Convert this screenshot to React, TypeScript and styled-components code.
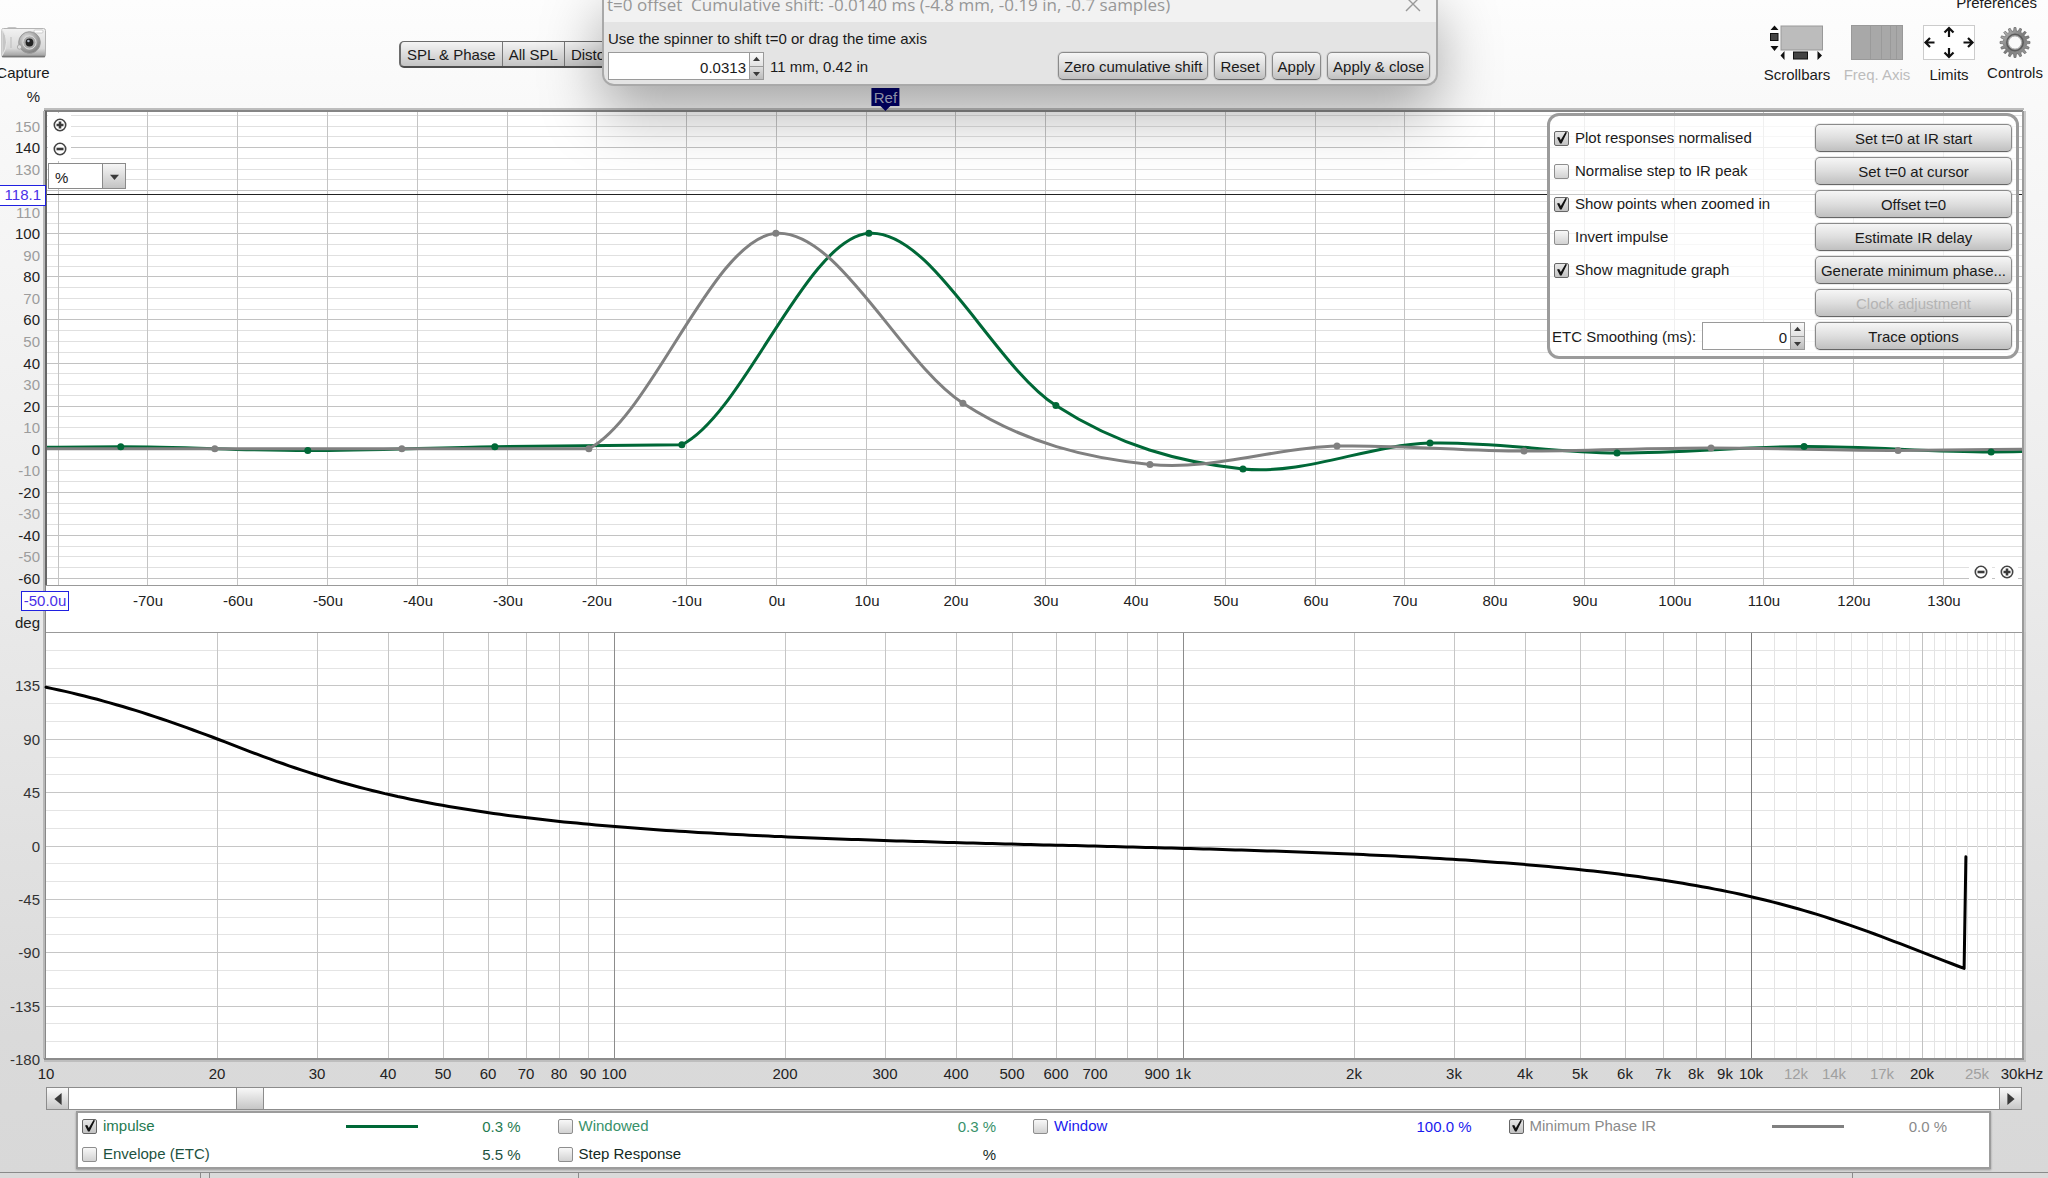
import React, { useId, useLayoutEffect, useRef, useState } from "react";
import styled, { createGlobalStyle, css } from "styled-components";

const FONT = `"Liberation Sans", Arial, sans-serif`;

const GlobalStyle = createGlobalStyle`
  *, *::before, *::after { box-sizing: border-box; }
  body { margin: 0; font-family: ${FONT}; font-size: 15px; color: #1a1a1a; }
  button, input, select { font: inherit; color: inherit; margin: 0; }
`;

const Page = styled.main`
  position: relative;
  display: flex;
  flex-direction: column;
  height: 100vh;
  min-height: 800px;
  overflow: hidden;
  background: linear-gradient(#fdfdfd 0, #f8f8f8 130px, #ececec 45%, #dadada 88%, #d8d8d8 100%);
`;

/* ---------- header ---------- */

const Header = styled.header`
  display: flex;
  flex-direction: column;
  height: 84px;
  flex: none;
`;

const MenuRow = styled.nav`
  display: flex;
  justify-content: flex-end;
  margin-top: -6px;
  padding-right: 11px;
`;

const MenuButton = styled.button`
  border: 0;
  padding: 0;
  background: none;
  line-height: 18px;
`;

const ToolRow = styled.div`
  display: flex;
  align-items: flex-start;
  padding-right: 5px;
`;

const ToolButton = styled.button<{ $width: number }>`
  display: flex;
  flex-direction: column;
  align-items: center;
  gap: 6px;
  flex: none;
  width: ${(p) => p.$width}px;
  margin-top: 13px;
  padding: 0;
  border: 0;
  background: none;
  line-height: 18px;
  white-space: nowrap;
  &:disabled { color: #bdbdbd; }
`;

const CaptureButton = styled(ToolButton)`
  margin-left: -3px;
`;

const Tools = styled.div`
  display: flex;
  gap: 12px;
  margin-left: auto;
`;

const Tabs = styled.nav`
  display: flex;
  height: 27px;
  margin: 29px 0 0 350px;
  border: 1px solid #6c6c6c;
  border-bottom: 2px solid #4c4c4c;
  border-left-width: 2px;
  border-radius: 5px;
  background: linear-gradient(#f4f4f4, #c4c4c4);
`;

const Tab = styled.button`
  padding: 0 6px;
  border: 0;
  border-right: 1px solid #777;
  background: none;
  white-space: nowrap;
`;

/* ---------- common controls ---------- */

const PushButton = styled.button<{ $tight?: boolean }>`
  height: 28px;
  padding: 0 ${(p) => (p.$tight ? 5 : 0)}px;
  border: 1px solid #8a8a8a;
  border-bottom-color: #666;
  border-radius: 5px;
  background: linear-gradient(#f6f6f6, #dedede 50%, #c0c0c0);
  box-shadow: 0 0 0 1px rgba(0, 0, 0, 0.08);
  white-space: nowrap;
  &:disabled { color: #b4b4b4; }
`;

const SpinnerBox = styled.span<{ $width: number }>`
  display: flex;
  width: ${(p) => p.$width}px;
  height: 28px;
  border: 1px solid #9a9a9a;
  background: #fff;
`;

const SpinnerInput = styled.input`
  flex: 1;
  min-width: 0;
  padding: 2px 3px 0 0;
  border: 0;
  background: none;
  text-align: right;
`;

const SpinnerArrows = styled.span`
  display: grid;
  grid-template-rows: 1fr 1fr;
  width: 14px;
  border-left: 1px solid #9a9a9a;
`;

const ArrowButton = styled.button`
  display: grid;
  place-items: center;
  padding: 0;
  border: 0;
  background: linear-gradient(#fafafa, #e2e2e2);
  & + & {
    border-top: 1px solid #9a9a9a;
    background: linear-gradient(#dedede, #bcbcbc);
  }
`;

function Triangle({ dir, size = 7 }: { dir: "up" | "down" | "left" | "right"; size?: number }) {
  const d = {
    up: "M0 7 L5 1 L10 7Z",
    down: "M0 3 L5 9 L10 3Z",
    left: "M8 0 L2 5 L8 10Z",
    right: "M2 0 L8 5 L2 10Z",
  }[dir];
  return (
    <svg width={size} height={size} viewBox="0 0 10 10" aria-hidden="true">
      <path d={d} fill="#3a3a3a" />
    </svg>
  );
}

function Spinner({ id, label, value, width }: { id: string; label?: string; value: string; width: number }) {
  return (
    <SpinnerBox $width={width}>
      <SpinnerInput id={id} aria-label={label} defaultValue={value} />
      <SpinnerArrows>
        <ArrowButton aria-label="Increase"><Triangle dir="up" /></ArrowButton>
        <ArrowButton aria-label="Decrease"><Triangle dir="down" /></ArrowButton>
      </SpinnerArrows>
    </SpinnerBox>
  );
}

const CheckLabel = styled.label<{ $color?: string }>`
  display: flex;
  align-items: center;
  gap: 6px;
  color: ${(p) => p.$color ?? "#1a1a1a"};
  white-space: nowrap;
  line-height: 18px;
`;

const TickBox = styled.span`
  display: grid;
  width: 15px;
  height: 15px;
  & > * { grid-area: 1 / 1; }
  svg { visibility: hidden; pointer-events: none; overflow: visible; }
  input:checked + svg { visibility: visible; }
`;

const TickInput = styled.input`
  appearance: none;
  width: 15px;
  height: 15px;
  border: 1px solid #8e8e8e;
  border-radius: 2px;
  background: linear-gradient(#f8f8f8, #d2d2d2);
  &:checked { border-color: #666; background: linear-gradient(#e8e8e8, #c2c2c2); }
`;

function Check({ text, checked, color }: { text: string; checked?: boolean; color?: string }) {
  return (
    <CheckLabel $color={color}>
      <TickBox>
        <TickInput type="checkbox" defaultChecked={checked} />
        <svg width="15" height="15" viewBox="0 0 15 15" aria-hidden="true">
          <path d="M3 6.5 L5.2 6 L6.8 9 L11.5 1 L13 1.4 L7.6 12.6 L6 12.6Z" fill="#111" />
        </svg>
      </TickBox>
      {text}
    </CheckLabel>
  );
}

/* ---------- offset dialog ---------- */

const Dialog = styled.section`
  position: absolute;
  top: -14px;
  left: 602px;
  z-index: 3;
  width: 836px;
  border: 2px solid #a9a9a9;
  border-top: 0;
  border-radius: 12px;
  background: #e4e4e4;
  box-shadow: 0 26px 60px rgba(0, 0, 0, 0.34);
`;

const DialogTitle = styled.header`
  display: flex;
  align-items: center;
  justify-content: space-between;
  height: 36px;
  padding: 0 15px 0 3px;
  border-radius: 12px 12px 0 0;
  background: #f2f2f2;
  color: #979797;
  font-family: "Open Sans", "Noto Sans", sans-serif;
  font-size: 17px;
  white-space: pre;
`;

const CloseButton = styled.button`
  display: flex;
  padding: 0;
  border: 0;
  background: none;
`;

const DialogBody = styled.div`
  display: flex;
  flex-direction: column;
  gap: 3px;
  padding: 7px 6px 4px 4px;
`;

const DialogHint = styled.label`
  line-height: 20px;
`;

const DialogRow = styled.div`
  display: flex;
  align-items: center;
  gap: 6px;
`;

const Distance = styled.span`
  flex: 1;
`;

/* ---------- charts ---------- */

const ChartArea = styled.section<{ $share: number }>`
  position: relative;
  flex: ${(p) => p.$share} 1 0;
  min-height: 0;
`;

const ChartSvg = styled.svg`
  display: block;
  overflow: visible;
  font-family: ${FONT};
  font-size: 15px;
`;

const PlotTools = styled.div`
  position: absolute;
  top: 29px;
  left: 48px;
  display: flex;
  flex-direction: column;
  align-items: flex-start;
`;

const AxisTools = styled.div`
  position: absolute;
  right: 30px;
  bottom: 48px;
  display: flex;
  gap: 3px;
`;

const ZoomButton = styled.button`
  display: grid;
  place-items: center;
  width: 23px;
  height: 24px;
  padding: 0;
  border: 0;
  background: #fff;
`;

const UnitPicker = styled.span`
  position: relative;
  display: flex;
  width: 78px;
  height: 26px;
  margin-top: 2px;
  border: 1px solid #8a8a8a;
  background: #fff;
`;

const UnitSelect = styled.select`
  appearance: none;
  width: 100%;
  padding: 2px 0 0 6px;
  border: 0;
  background: none;
`;

const UnitArrow = styled.span`
  position: absolute;
  inset: 0 0 0 auto;
  display: grid;
  place-items: center;
  width: 23px;
  border-left: 1px solid #8a8a8a;
  background: linear-gradient(#f6f6f6, #c4c4c4);
  pointer-events: none;
`;

const ControlPanel = styled.aside`
  position: absolute;
  top: 29px;
  right: 29px;
  display: grid;
  grid-template-columns: 253px 197px;
  column-gap: 10px;
  padding: 8px 4px 6px 2px;
  border: 3px solid #9b9b9b;
  border-radius: 12px;
  background: rgba(255, 255, 255, 0.75);
`;

const PanelColumn = styled.div`
  display: grid;
  grid-auto-rows: 28px;
  gap: 5px;
  & > ${CheckLabel} { padding-left: 2px; }
`;

const SmoothingRow = styled.div`
  display: flex;
  align-items: center;
  justify-content: space-between;
  grid-row: 7;
`;

function useSize<T extends HTMLElement>() {
  const ref = useRef<T>(null);
  const [size, setSize] = useState({ w: 0, h: 0 });
  useLayoutEffect(() => {
    const el = ref.current;
    if (!el) return;
    const read = () => setSize({ w: el.clientWidth, h: el.clientHeight });
    read();
    const ro = new ResizeObserver(read);
    ro.observe(el);
    return () => ro.disconnect();
  }, []);
  return [ref, size] as const;
}

const LEFT = 46;
const RIGHT_GAP = 26;
const range = (from: number, to: number, step: number) => {
  const out: number[] = [];
  for (let v = from; v <= to; v += step) out.push(v);
  return out;
};

// A sample carries its time in microseconds, level in percent, slope in percent per microsecond.
// "slopeIn" applies where the trace has a corner.
type Sample = { t: number; v: number; slope: number; slopeIn?: number };
const STEP = 20.833;
const trace = (offset: number, first: number, values: [number, number, number?][]): Sample[] =>
  values.map(([v, slope, slopeIn], i) => ({ t: offset + (first + i) * STEP, v, slope, slopeIn }));

const impulse = trace(10.36, -5, [
  [0, 0.03], [0.9, 0], [-0.9, 0], [0.9, 0.06], [1.8, 2.1, 0.02], [100, 0.3], [20, -2.7],
  [-9.4, -0.42], [2.6, 0.12], [-2, -0.02], [1, 0.02], [-1.5, 0], [0.2, 0],
]);
const minimumPhase = trace(0, -4, [
  [0, 0], [0, 0], [0, 0], [0, 2.1, 0], [100, 0.3], [21.1, -2.7],
  [-7.3, -0.42], [1.2, 0.1], [-1.1, 0], [0.3, 0], [-0.8, 0], [0, 0],
]);

const timeLabels = range(-70, 130, 10);

function ImpulseChart() {
  const [ref, { w, h }] = useSize<HTMLElement>();
  const clip = useId();
  const top = 27;
  const bottom = h - 47;
  const right = w - RIGHT_GAP;
  const x = (t: number) => LEFT + ((t + 81.3) / 220.1) * (right - LEFT);
  const y = (v: number) => top + ((156.8 - v) / 220.1) * (bottom - top);
  const px = Math.round;

  const curve = (s: Sample[]) =>
    s.map((p, i) => {
      if (i === 0) return `M${x(p.t)} ${y(p.v)}`;
      const q = s[i - 1];
      const d = (p.t - q.t) / 3;
      const slopeIn = p.slopeIn ?? p.slope;
      return `C${x(q.t + d)} ${y(q.v + q.slope * d)} ${x(p.t - d)} ${y(p.v - slopeIn * d)} ${x(p.t)} ${y(p.v)}`;
    }).join(" ");

  return (
    <ChartArea $share={548} ref={ref} aria-label="Impulse response">
      {w > 0 && (
        <ChartSvg width={w} height={h}>
          <clipPath id={clip}><rect x={LEFT} y={top} width={right - LEFT} height={bottom - top} /></clipPath>
          <rect x={LEFT} y={top} width={right - LEFT} height={h - top} fill="#fff" />
          <g shapeRendering="crispEdges">
            {range(-60, 155, 5).map((v) => (
              <rect key={v} x={LEFT} y={px(y(v))} width={right - LEFT} height={1} fill={v % 20 === 0 ? "#c2c2c2" : "#e0e0e0"} />
            ))}
            {range(-80, 130, 10).map((t) => (
              <rect key={t} x={px(x(t))} y={top} width={1} height={bottom - top} fill="#c4c4c4" />
            ))}
            <rect x={LEFT} y={px(y(118.1))} width={right - LEFT} height={1} fill="#222" />
            <rect x={LEFT} y={bottom} width={right - LEFT} height={1} fill="#999" />
          </g>
          <g clipPath={`url(#${clip})`} fill="none" strokeWidth={3}>
            <path d={curve(impulse)} stroke="#006837" />
            <path d={curve(minimumPhase)} stroke="#808080" />
            {impulse.map((p) => <circle key={p.t} cx={x(p.t)} cy={y(p.v)} r={3.5} fill="#006837" />)}
            {minimumPhase.map((p) => <circle key={p.t} cx={x(p.t)} cy={y(p.v)} r={3.5} fill="#808080" />)}
          </g>
          <g shapeRendering="crispEdges">
            <rect x={LEFT - 2} y={top - 3} width={right - LEFT + 4} height={2} fill="#bdbdbd" />
            <rect x={LEFT - 2} y={top - 1} width={right - LEFT + 3} height={2} fill="#858585" />
            <rect x={LEFT - 3} y={top} width={2} height={h - top} fill="#b8b8b8" />
            <rect x={LEFT - 1} y={top} width={2} height={bottom - top} fill="#666" />
            <rect x={LEFT - 1} y={bottom} width={1} height={47} fill="#888" />
            <rect x={right} y={top} width={2} height={h - top} fill="#9a9a9a" />
            <rect x={right + 2} y={top} width={2} height={h - top} fill="#c8c8c8" />
          </g>
          <text x={40} y={18} textAnchor="end" fill="#222">%</text>
          <g textAnchor="end">
            {range(-60, 150, 10).filter((v) => v !== 120).map((v) => (
              <text key={v} x={40} y={px(y(v)) + 6} fill={v % 20 === 0 ? "#222" : "#9c9c9c"}>{v}</text>
            ))}
          </g>
          <g textAnchor="middle" fill="#222">
            {timeLabels.map((t) => <text key={t} x={px(x(t)) + 1} y={bottom + 21}>{t}u</text>)}
          </g>
          <text x={40} y={h - 4} textAnchor="end" fill="#222">deg</text>
          <g fill="#fff" stroke="#2020e0" shapeRendering="crispEdges">
            <rect x={-1} y={px(y(118.1)) - 9} width={46} height={20} />
            <rect x={21} y={bottom + 6} width={47} height={19} />
          </g>
          <g fill="#4a30e8">
            <text x={41} y={px(y(118.1)) + 6} textAnchor="end">118.1</text>
            <text x={45} y={bottom + 21} textAnchor="middle">-50.0u</text>
          </g>
          <path d={`M${x(12.2) - 14} 4 h28 v18 h-9 l-5 5 l-5 -5 h-9Z`} fill="#00006e" />
          <text x={x(12.2)} y={19} textAnchor="middle" fill="#b8bcd8">Ref</text>
        </ChartSvg>
      )}
      <PlotTools>
        <ZoomButton aria-label="Zoom in vertically"><ZoomIcon plus /></ZoomButton>
        <ZoomButton aria-label="Zoom out vertically"><ZoomIcon /></ZoomButton>
        <UnitPicker>
          <UnitSelect aria-label="Vertical axis unit" defaultValue="%">
            <option>%</option>
          </UnitSelect>
          <UnitArrow><Triangle dir="down" size={9} /></UnitArrow>
        </UnitPicker>
      </PlotTools>
      <AxisTools>
        <ZoomButton aria-label="Zoom out horizontally"><ZoomIcon /></ZoomButton>
        <ZoomButton aria-label="Zoom in horizontally"><ZoomIcon plus /></ZoomButton>
      </AxisTools>
      <ControlPanel aria-label="Graph controls">
        <PanelColumn>
          <Check text="Plot responses normalised" checked />
          <Check text="Normalise step to IR peak" />
          <Check text="Show points when zoomed in" checked />
          <Check text="Invert impulse" />
          <Check text="Show magnitude graph" checked />
          <SmoothingRow>
            <label htmlFor="etc-smoothing">ETC Smoothing (ms):</label>
            <Spinner id="etc-smoothing" value="0" width={103} />
          </SmoothingRow>
        </PanelColumn>
        <PanelColumn>
          <PushButton>Set t=0 at IR start</PushButton>
          <PushButton>Set t=0 at cursor</PushButton>
          <PushButton>Offset t=0</PushButton>
          <PushButton>Estimate IR delay</PushButton>
          <PushButton>Generate minimum phase...</PushButton>
          <PushButton disabled>Clock adjustment</PushButton>
          <PushButton>Trace options</PushButton>
        </PanelColumn>
      </ControlPanel>
    </ChartArea>
  );
}

// Second-order high pass at 20 Hz followed by a second-order low pass at 20 kHz.
const phaseAt = (f: number) => {
  const lag = (r: number) => (Math.atan2(Math.SQRT2 * r, 1 - r * r) * 180) / Math.PI;
  const lowEnd = f < 20 ? 3.2 * Math.pow((20 - f) / 10, 1.3) : 0;
  return 180 - lag(f / 20) - lag(f / 20000) - lowEnd;
};
const LAST_FREQUENCY = 23730;

const frequencyLabels: [number, string][] = [
  [10, "10"], [20, "20"], [30, "30"], [40, "40"], [50, "50"], [60, "60"], [70, "70"], [80, "80"], [90, "90"],
  [100, "100"], [200, "200"], [300, "300"], [400, "400"], [500, "500"], [600, "600"], [700, "700"], [900, "900"],
  [1000, "1k"], [2000, "2k"], [3000, "3k"], [4000, "4k"], [5000, "5k"], [6000, "6k"], [7000, "7k"], [8000, "8k"],
  [9000, "9k"], [10000, "10k"], [12000, "12k"], [14000, "14k"], [17000, "17k"], [20000, "20k"], [25000, "25k"],
  [30000, "30kHz"],
];
const faintLabels = [12000, 14000, 17000, 25000];

const frequencyLines: [number, string][] = [
  ...[10, 100, 1000].flatMap((d) => range(2, 9, 1).map((n): [number, string] => [n * d, "#c6c6c6"])),
  ...range(11, 29, 1).map((n): [number, string] => [n * 1000, n === 20 ? "#c2c2c2" : "#e4e4e4"]),
  [100, "#8c8c8c"], [1000, "#8c8c8c"], [10000, "#7c7c7c"],
];

function PhaseChart() {
  const [ref, { w, h }] = useSize<HTMLElement>();
  const top = 0;
  const bottom = h - 28;
  const right = w - RIGHT_GAP;
  const x = (f: number) => LEFT + (Math.log10(f / 10) / Math.log10(3000)) * (right - LEFT);
  const y = (deg: number) => top + ((180 - deg) / 360) * (bottom - top);
  const px = Math.round;

  const curve = range(0, 300, 1)
    .map((i) => 10 * Math.pow(LAST_FREQUENCY / 10, i / 300))
    .map((f, i) => `${i ? "L" : "M"}${x(f).toFixed(1)} ${y(phaseAt(f)).toFixed(1)}`)
    .join(" ") + ` L${x(23900)} ${y(-9.5)}`;

  return (
    <ChartArea $share={455} ref={ref} aria-label="Phase">
      {w > 0 && (
        <ChartSvg width={w} height={h}>
          <rect x={LEFT} y={top} width={right - LEFT} height={bottom - top} fill="#fff" />
          <g shapeRendering="crispEdges">
            {range(-165, 165, 15).map((v) => (
              <rect key={v} x={LEFT} y={px(y(v))} width={right - LEFT} height={1} fill={v % 45 === 0 ? "#c6c6c6" : "#e4e4e4"} />
            ))}
            {frequencyLines.map(([f, c]) => (
              <rect key={f} x={px(x(f))} y={top} width={1} height={bottom - top} fill={c} />
            ))}
            <rect x={LEFT} y={top} width={right - LEFT} height={1} fill="#999" />
            <rect x={LEFT - 3} y={top} width={2} height={bottom - top} fill="#b8b8b8" />
            <rect x={LEFT - 1} y={top} width={1} height={bottom - top} fill="#888" />
            <rect x={right} y={top} width={2} height={bottom - top} fill="#9a9a9a" />
            <rect x={right + 2} y={top} width={2} height={bottom - top + 3} fill="#c4c4c4" />
            <rect x={LEFT - 2} y={bottom - 1} width={right - LEFT + 4} height={2} fill="#8c8c8c" />
            <rect x={LEFT - 2} y={bottom + 1} width={right - LEFT + 6} height={2} fill="#bebebe" />
          </g>
          <path d={curve} fill="none" stroke="#000" strokeWidth={3} strokeLinecap="round" strokeLinejoin="round" />
          <g textAnchor="end" fill="#333">
            {[135, 90, 45, 0, -45, -90, -135, -180].map((v) => (
              <text key={v} x={40} y={px(y(v)) + 6}>{v}</text>
            ))}
          </g>
          <g textAnchor="middle">
            {frequencyLabels.map(([f, label]) => (
              <text key={f} x={px(x(f))} y={bottom + 20} fill={faintLabels.includes(f) ? "#a0a0a0" : "#222"}>
                {label}
              </text>
            ))}
          </g>
        </ChartSvg>
      )}
    </ChartArea>
  );
}

/* ---------- scroll bar, legend, status ---------- */

const ScrollBar = styled.div`
  display: flex;
  flex: none;
  height: 23px;
  margin: 0 26px 1px 46px;
  border: 1px solid #8c8c8c;
  background: #fff;
`;

const ScrollButton = styled.button<{ $end?: boolean }>`
  display: grid;
  place-items: center;
  flex: none;
  width: 22px;
  padding: 0;
  border: 0 solid #8c8c8c;
  border-width: ${(p) => (p.$end ? "0 0 0 1px" : "0 1px 0 0")};
  background: linear-gradient(#fafafa, #c8c8c8);
`;

const thumb = css`
  appearance: none;
  width: 28px;
  height: 21px;
  border: 0 solid #8c8c8c;
  border-width: 0 1px;
  border-radius: 0;
  background: linear-gradient(#f8f8f8, #c6c6c6);
`;

const ScrollTrack = styled.input`
  appearance: none;
  flex: 1;
  min-width: 0;
  height: 21px;
  background: none;
  &::-webkit-slider-thumb { ${thumb} }
  &::-moz-range-thumb { ${thumb} }
`;

const Legend = styled.section`
  display: grid;
  grid-template-columns: repeat(4, 1fr);
  grid-auto-rows: 26px;
  row-gap: 2px;
  flex: none;
  height: 58px;
  margin: 0 57px 3px 76px;
  padding: 0 5px 0 4px;
  border: 2px solid #9c9c9c;
  background: #fff;
  box-shadow: 0 1px 2px rgba(0, 0, 0, 0.3);
`;

const LegendItem = styled.div<{ $color: string }>`
  display: flex;
  align-items: center;
  padding-right: 37px;
  color: ${(p) => p.$color};
  & > ${CheckLabel} { flex: 1; }
`;

const TraceLine = styled.svg`
  width: 72px;
  height: 3px;
  flex: none;
`;

const LegendValue = styled.output`
  width: 103px;
  flex: none;
  text-align: right;
`;

const legend = [
  { name: "impulse", value: "0.3 %", color: "#1f7a50", line: "#006837", on: true },
  { name: "Windowed", value: "0.3 %", color: "#38916a" },
  { name: "Window", value: "100.0 %", color: "#1a1aee" },
  { name: "Minimum Phase IR", value: "0.0 %", color: "#8a8a8a", line: "#808080", on: true },
  { name: "Envelope (ETC)", value: "5.5 %", color: "#1d5240" },
  { name: "Step Response", value: "%", color: "#142a24" },
];

const StatusBar = styled.footer`
  display: grid;
  grid-template-columns: 201px 9px 369px 1fr 195px;
  flex: none;
  height: 6px;
  border-top: 1px solid #8a8a8a;
  background: #dadada;
`;

const StatusCell = styled.span`
  border-right: 1px solid #8a8a8a;
  &:last-child { border-right: 0; }
`;

/* ---------- icons ---------- */

function ZoomIcon({ plus }: { plus?: boolean }) {
  return (
    <svg width="14" height="14" viewBox="0 0 14 14" aria-hidden="true">
      <circle cx="7" cy="7" r="5.7" fill="#fff" stroke="#444" strokeWidth="1.6" />
      <path d={plus ? "M3.5 7 H10.5 M7 3.5 V10.5" : "M3.5 7 H10.5"} stroke="#3a3a3a" strokeWidth="2.6" />
    </svg>
  );
}

function CameraIcon() {
  return (
    <svg width="46" height="33" viewBox="0 0 46 33" aria-hidden="true">
      <defs>
        <linearGradient id="camBody" x1="0" y1="0" x2="0" y2="1">
          <stop offset="0" stopColor="#f2f2f2" /><stop offset="0.7" stopColor="#d8d8d8" /><stop offset="1" stopColor="#9a9a9a" />
        </linearGradient>
        <radialGradient id="camLens" cx="0.4" cy="0.35" r="0.7">
          <stop offset="0" stopColor="#eee" /><stop offset="1" stopColor="#777" />
        </radialGradient>
      </defs>
      <path d="M7 3 q1 -1.5 3 -1 l5 0 q2 0 2 2 h-10Z" fill="#c4c4c4" />
      <rect x="1.5" y="3.5" width="44" height="28.5" rx="2" fill="url(#camBody)" stroke="#b4b4b4" />
      <path d="M2 4 Q11 17 2 31Z" fill="#c6c6c6" stroke="#eee" strokeWidth="0.8" />
      <path d="M2 31.5 H45" stroke="#777" strokeWidth="1.6" />
      <rect x="34" y="5" width="9" height="3" rx="1" fill="#fff" stroke="#bbb" strokeWidth="0.7" />
      <path d="M11 12 V23" stroke="#bbb" />
      <circle cx="29.5" cy="17.5" r="10.8" fill="url(#camLens)" stroke="#999" />
      <circle cx="29.5" cy="17.5" r="6.6" fill="#aaa" stroke="#ddd" />
      <circle cx="29.5" cy="17.5" r="3.9" fill="#222" />
      <circle cx="28.4" cy="16" r="1.3" fill="#aeb6c4" />
      <circle cx="19.5" cy="22" r="2.2" fill="#ddd" stroke="#999" strokeWidth="0.7" />
    </svg>
  );
}

function ScrollbarsIcon() {
  return (
    <svg width="54" height="35" viewBox="0 0 54 35" aria-hidden="true">
      <rect x="11" y="1" width="41.5" height="24" fill="#bcbcbc" stroke="#999" />
      <path d="M0.5 5 L4.5 0.5 L8.5 5Z M0.5 21 L4.5 26 L8.5 21Z M14.5 26 L10.5 30.5 L14.5 35Z M47.5 26 L52 30.5 L47.5 35Z" fill="#111" />
      <rect x="0.5" y="8.5" width="7.5" height="7" fill="#444" stroke="#111" />
      <rect x="23.5" y="27" width="14" height="7" fill="#444" stroke="#111" />
    </svg>
  );
}

function FrequencyIcon() {
  return (
    <svg width="52" height="35" viewBox="0 0 52 35" aria-hidden="true">
      <rect x="0.5" y="0.5" width="51" height="34" fill="#a8a8a8" stroke="#999" />
      <path d="M19.5 1 V34 M30.5 1 V34 M39.5 1 V34 M45.5 1 V34" stroke="#9a9a9a" />
    </svg>
  );
}

function LimitsIcon() {
  return (
    <svg width="52" height="35" viewBox="0 0 52 35" aria-hidden="true">
      <rect x="0.5" y="0.5" width="51" height="34" fill="#fff" stroke="#ccc" />
      <path
        d="M26 3 V12 M21.5 7.5 L26 3 L30.5 7.5 M26 32 V23 M21.5 27.5 L26 32 L30.5 27.5 M2.5 17.5 H11.5 M7 13 L2.5 17.5 L7 22 M49.5 17.5 H40.5 M45 13 L49.5 17.5 L45 22"
        fill="none"
        stroke="#111"
        strokeWidth="2.2"
      />
    </svg>
  );
}

function GearIcon() {
  const teeth = 16;
  const points = Array.from({ length: teeth * 4 }, (_, i) => {
    const phaseInTooth = i % 4;
    const r = phaseInTooth === 1 || phaseInTooth === 2 ? 15 : 11.6;
    const shift = [-0.3, -0.17, 0.17, 0.3][phaseInTooth];
    const a = ((Math.floor(i / 4) + shift) / teeth) * Math.PI * 2;
    return `${(16 + r * Math.cos(a)).toFixed(2)},${(17.5 + r * Math.sin(a)).toFixed(2)}`;
  }).join(" ");
  return (
    <svg width="32" height="33" viewBox="0 0 32 33" aria-hidden="true">
      <defs>
        <linearGradient id="gearFill" x1="0" y1="0" x2="1" y2="1">
          <stop offset="0" stopColor="#c4c4c4" /><stop offset="0.5" stopColor="#7c7c7c" /><stop offset="1" stopColor="#9c9c9c" />
        </linearGradient>
      </defs>
      <polygon points={points} fill="url(#gearFill)" stroke="#666" strokeWidth="0.7" />
      <circle cx="16" cy="17.5" r="8.2" fill="none" stroke="#5c5c5c" strokeWidth="1.5" />
      <circle cx="16" cy="17.5" r="6.6" fill="#fafafa" stroke="#aaa" strokeWidth="1" />
    </svg>
  );
}

export default function App() {
  return (
    <Page>
      <GlobalStyle />
      <Header>
        <MenuRow><MenuButton>Preferences</MenuButton></MenuRow>
        <ToolRow>
          <CaptureButton $width={52}><CameraIcon />Capture</CaptureButton>
          <Tabs aria-label="Graphs">
            <Tab>SPL &amp; Phase</Tab>
            <Tab>All SPL</Tab>
            <Tab>Distortion</Tab>
          </Tabs>
          <Tools>
            <ToolButton $width={68}><ScrollbarsIcon />Scrollbars</ToolButton>
            <ToolButton $width={68} disabled><FrequencyIcon />Freq. Axis</ToolButton>
            <ToolButton $width={52}><LimitsIcon />Limits</ToolButton>
            <ToolButton $width={56}><GearIcon />Controls</ToolButton>
          </Tools>
        </ToolRow>
      </Header>

      <ImpulseChart />
      <PhaseChart />

      <ScrollBar>
        <ScrollButton aria-label="Scroll left"><Triangle dir="left" size={12} /></ScrollButton>
        <ScrollTrack type="range" aria-label="Frequency position" min={0} max={1000} defaultValue={88} />
        <ScrollButton $end aria-label="Scroll right"><Triangle dir="right" size={12} /></ScrollButton>
      </ScrollBar>

      <Legend aria-label="Traces">
        {legend.map((item) => (
          <LegendItem key={item.name} $color={item.color}>
            <Check text={item.name} checked={item.on} color={item.color} />
            {item.line && (
              <TraceLine viewBox="0 0 72 3" aria-hidden="true"><rect width="72" height="3" fill={item.line} /></TraceLine>
            )}
            <LegendValue>{item.value}</LegendValue>
          </LegendItem>
        ))}
      </Legend>

      <StatusBar>
        <StatusCell /><StatusCell /><StatusCell /><StatusCell /><StatusCell />
      </StatusBar>

      <Dialog role="dialog" aria-label="t=0 offset">
        <DialogTitle>
          <span>{"t=0 offset  Cumulative shift: -0.0140 ms (-4.8 mm, -0.19 in, -0.7 samples)"}</span>
          <CloseButton aria-label="Close">
            <svg width="16" height="16" viewBox="0 0 16 16" aria-hidden="true">
              <path d="M1 1 L15 15 M15 1 L1 15" stroke="#999" strokeWidth="1.4" />
            </svg>
          </CloseButton>
        </DialogTitle>
        <DialogBody>
          <DialogHint htmlFor="offset">Use the spinner to shift t=0 or drag the time axis</DialogHint>
          <DialogRow>
            <Spinner id="offset" value="0.0313" width={156} />
            <Distance>11 mm, 0.42 in</Distance>
            <PushButton $tight>Zero cumulative shift</PushButton>
            <PushButton $tight>Reset</PushButton>
            <PushButton $tight>Apply</PushButton>
            <PushButton $tight>Apply &amp; close</PushButton>
          </DialogRow>
        </DialogBody>
      </Dialog>
    </Page>
  );
}
